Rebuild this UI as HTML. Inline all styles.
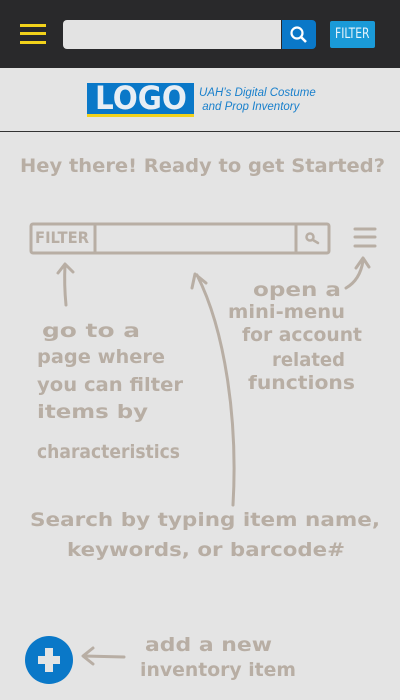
<!DOCTYPE html>
<html><head><meta charset="utf-8"><style>
body{margin:0;width:400px;height:700px;background:#e4e4e4;overflow:hidden;font-family:"Liberation Sans",sans-serif;position:relative}
.top{position:absolute;left:0;top:0;width:400px;height:68px;background:#29292b}
.hb{position:absolute;left:20px;width:26px;height:3px;background:#f2d21b}
.search{position:absolute;left:63px;top:20px;width:218px;height:29px;background:#e3e3e3;border-radius:4px 0 0 4px}
.sbtn{position:absolute;left:282px;top:20px;width:34px;height:29px;background:#0a78c8;border-radius:0 4px 4px 0}
.filter{position:absolute;left:330px;top:21px;width:45px;height:27px;background:#1a9ad8;border-radius:2px;color:#e8f4fb;font:14px "DejaVu Sans Condensed","Liberation Sans Narrow",sans-serif;text-align:center;line-height:27px}
.filter span{display:inline-block;transform:scaleX(.85)}
.logo{position:absolute;left:87px;top:83px;width:107px;height:31px;background:#0a78c8;border-bottom:3px solid #f2d21b;color:#e8eef4;font:900 32px "DejaVu Sans",sans-serif;text-align:center;line-height:31px}
.logo span{display:inline-block;transform:scaleX(.92)}
.lt{position:absolute;left:199px;top:86px;color:#1a80cc;font:italic 11.5px "Liberation Sans",sans-serif;line-height:14px}
.hr{position:absolute;left:0;top:131px;width:400px;height:1px;background:#333}
</style></head><body>
<div class="top">
<div class="hb" style="top:24px"></div><div class="hb" style="top:32px"></div><div class="hb" style="top:41px"></div>
</div>
<div class="search"></div>
<div class="sbtn"><svg width="34" height="29"><circle cx="15" cy="13" r="5.5" fill="none" stroke="#fff" stroke-width="2.2"/><line x1="19" y1="17" x2="24" y2="22" stroke="#fff" stroke-width="2.6"/></svg></div>
<div class="filter"><span>FILTER</span></div>
<div class="logo"><span>LOGO</span></div>
<div class="lt">UAH’s Digital Costume<br>&nbsp;and Prop Inventory</div>
<div class="hr"></div>
<svg width="400" height="700" style="position:absolute;left:0;top:0" font-family="DejaVu Sans, sans-serif" fill="#b8aea4">
<g fill="none" stroke="#b8aea4" stroke-width="3" stroke-linecap="round" stroke-linejoin="round">
<rect x="31" y="224" width="298" height="29" rx="2"/>
<line x1="95" y1="224" x2="95" y2="253"/><line x1="296" y1="224" x2="296" y2="253"/>
<circle cx="310" cy="237" r="3.5" stroke-width="2.5"/><line x1="313" y1="240" x2="318" y2="243" stroke-width="2.5"/>
<line x1="355" y1="229" x2="375" y2="229"/><line x1="355" y1="237" x2="375" y2="237"/><line x1="355" y1="246" x2="375" y2="246"/>
<path d="M66 305 Q64 285 65 265 M58 273 L65 264 L73 272"/>
<path d="M233 505 C238 420 225 330 197 275 M192 288 L195 274 L206 283"/>
<path d="M346 288 Q360 280 363 261 M356 268 L363 258 L369 267"/>
<path d="M124 657 L84 656 M93 648 L83 656 L93 664"/>
</g>
<g font-size="19" font-weight="bold" fill="#b8aea4">
<text x="20" y="172" textLength="365" lengthAdjust="spacingAndGlyphs">Hey there! Ready to get Started?</text>
<text x="35" y="243" font-size="16" textLength="54" lengthAdjust="spacingAndGlyphs">FILTER</text>
<text x="42" y="337" textLength="98" lengthAdjust="spacingAndGlyphs">go to a</text>
<text x="37" y="363" textLength="128" lengthAdjust="spacingAndGlyphs">page where</text>
<text x="37" y="391" textLength="146" lengthAdjust="spacingAndGlyphs">you can filter</text>
<text x="37" y="418" textLength="111" lengthAdjust="spacingAndGlyphs">items by</text>
<text x="37" y="458" textLength="143" lengthAdjust="spacingAndGlyphs">characteristics</text>
<text x="253" y="296" textLength="88" lengthAdjust="spacingAndGlyphs">open a</text>
<text x="228" y="318" textLength="117" lengthAdjust="spacingAndGlyphs">mini-menu</text>
<text x="242" y="341" textLength="120" lengthAdjust="spacingAndGlyphs">for account</text>
<text x="272" y="366" textLength="73" lengthAdjust="spacingAndGlyphs">related</text>
<text x="248" y="389" textLength="107" lengthAdjust="spacingAndGlyphs">functions</text>
<text x="30" y="526" textLength="350" lengthAdjust="spacingAndGlyphs">Search by typing item name,</text>
<text x="67" y="556" textLength="278" lengthAdjust="spacingAndGlyphs">keywords, or barcode#</text>
<text x="145" y="651" textLength="127" lengthAdjust="spacingAndGlyphs">add a new</text>
<text x="140" y="676" textLength="156" lengthAdjust="spacingAndGlyphs">inventory item</text>
</g>
<circle cx="49" cy="660" r="24" fill="#0a78c8"/>
<rect x="38" y="656" width="22" height="8" fill="#e4e4e4"/><rect x="45" y="648" width="8" height="24" fill="#e4e4e4"/>
</svg>
</body></html>
